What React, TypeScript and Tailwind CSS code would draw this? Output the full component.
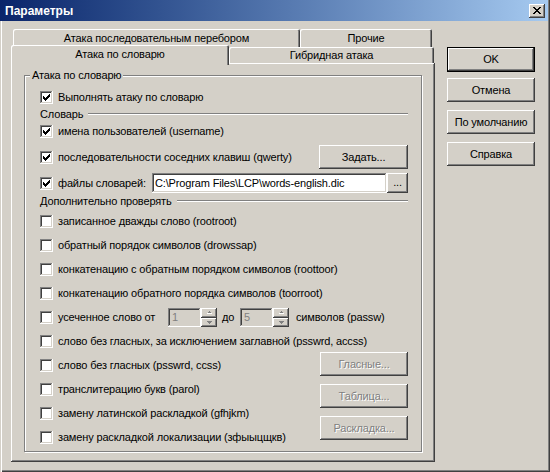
import React from "react";

type Kids = { children?: React.ReactNode };

// Classic sunken checkbox with the 7x7 pixel check glyph
function Check({ checked }: { checked?: boolean }) {
  const cols = [
    [3, 5],
    [4, 6],
    [5, 7],
    [6, 6],
    [7, 5],
    [8, 4],
    [9, 3],
  ];
  return (
    <span className="block w-[13px] h-[13px] shrink-0 bg-white shadow-[inset_-1px_-1px_#fff,inset_1px_1px_#808080,inset_-2px_-2px_#d4d0c8,inset_2px_2px_#404040]">
      {checked && (
        <svg width="13" height="13" className="block" shapeRendering="crispEdges">
          {cols.map(([x, y]) => (
            <rect key={x} x={x} y={y} width="1" height="3" fill="#000" />
          ))}
        </svg>
      )}
    </span>
  );
}

function CheckRow({ label, checked }: { label: string; checked?: boolean }) {
  return (
    <div className="flex items-center gap-[5px] h-[24px]">
      <Check checked={checked} />
      <span className="whitespace-nowrap">{label}</span>
    </div>
  );
}

function DisabledBtn({ children }: Kids) {
  return (
    <div className="w-[88px] h-[24px] flex items-center justify-center text-[#808080] [text-shadow:1px_1px_0_#fff] shadow-[inset_-1px_-1px_#404040,inset_1px_1px_#fff,inset_-2px_-2px_#808080,inset_2px_2px_#d4d0c8]">
      {children}
    </div>
  );
}

function SideBtn({ children }: Kids) {
  return (
    <div className="w-[88px] h-[24px] flex items-center justify-center shadow-[inset_-1px_-1px_#404040,inset_1px_1px_#fff,inset_-2px_-2px_#808080,inset_2px_2px_#d4d0c8]">
      {children}
    </div>
  );
}

// Disabled numeric edit with its up/down spinner
function Spin({ value }: { value: string }) {
  return (
    <div className="flex h-[19px] shrink-0">
      <div className="w-[33px] h-full pl-[4px] flex items-center text-[#808080] shadow-[inset_-1px_-1px_#fff,inset_1px_1px_#808080,inset_-2px_-2px_#d4d0c8,inset_2px_2px_#404040]">
        {value}
      </div>
      <div className="w-[16px] h-full flex flex-col">
        <div className="h-[10px] flex items-center justify-center shadow-[inset_-1px_-1px_#404040,inset_1px_1px_#fff,inset_-2px_-2px_#808080]">
          <svg width="5" height="3" shapeRendering="crispEdges" className="block">
            <rect x="2" y="0" width="1" height="1" fill="#808080" />
            <rect x="1" y="1" width="3" height="1" fill="#808080" />
            <rect x="0" y="2" width="5" height="1" fill="#fff" />
          </svg>
        </div>
        <div className="h-[9px] flex items-center justify-center shadow-[inset_-1px_-1px_#404040,inset_1px_1px_#fff,inset_-2px_-2px_#808080]">
          <svg width="5" height="3" shapeRendering="crispEdges" className="block">
            <rect x="0" y="0" width="5" height="1" fill="#808080" />
            <rect x="1" y="1" width="3" height="1" fill="#808080" />
            <rect x="2" y="2" width="1" height="1" fill="#808080" />
          </svg>
        </div>
      </div>
    </div>
  );
}

function CloseGlyph() {
  const px: [number, number, number][] = [
    [0, 0, 2], [6, 0, 2],
    [1, 1, 2], [5, 1, 2],
    [2, 2, 4],
    [3, 3, 2],
    [2, 4, 4],
    [1, 5, 2], [5, 5, 2],
    [0, 6, 2], [6, 6, 2],
  ];
  return (
    <svg width="8" height="7" shapeRendering="crispEdges" className="block">
      {px.map(([x, y, w], i) => (
        <rect key={i} x={x} y={y} width={w} height="1" fill="#000" />
      ))}
    </svg>
  );
}

export default function App() {
  return (
    <div className="w-[550px] h-[472px] bg-[#d4d0c8] text-black text-[11px] leading-[13px] tracking-[-0.15px] [font-family:'Liberation_Sans',Arial,sans-serif] flex flex-col overflow-hidden shadow-[inset_1px_0_#d4d0c8,inset_2px_0_#fff,inset_-1px_-1px_#404040,inset_-2px_-2px_#808080]">
      {/* caption */}
      <div className="h-[21px] mr-[2px] shrink-0 flex items-center justify-between pl-[5px] pr-[3px] bg-linear-to-r from-[#0a246a] to-[#a6caf0]">
        <span className="text-white font-bold text-[12px] leading-[14px] tracking-normal">Параметры</span>
        <div className="w-[16px] h-[14px] flex items-center justify-center bg-[#d4d0c8] shadow-[inset_-1px_-1px_#404040,inset_1px_1px_#fff,inset_-2px_-2px_#808080]">
          <CloseGlyph />
        </div>
      </div>

      <div className="flex pl-[11px] pt-[8px] gap-[12px]">
        {/* tab control */}
        <div className="w-[424px] flex flex-col">
          <div className="flex ml-[2px] h-[18px]">
            <div className="w-[287px] h-full flex items-center justify-center rounded-t-[2px] shadow-[inset_1px_1px_#fff,inset_-1px_0_#404040,inset_-2px_0_#808080]">
              Атака последовательным перебором
            </div>
            <div className="w-[132px] h-full flex items-center justify-center rounded-t-[2px] shadow-[inset_1px_1px_#fff,inset_-1px_0_#404040,inset_-2px_0_#808080]">
              Прочие
            </div>
          </div>
          <div className="flex items-start h-[18px]">
            <div className="relative z-10 -mt-[2px] w-[218px] h-[20px] pb-[2px] bg-[#d4d0c8] flex items-center justify-center rounded-t-[2px] shadow-[inset_1px_1px_#fff,inset_-1px_0_#404040,inset_-2px_0_#808080]">
              Атака по словарю
            </div>
            <div className="w-[205px] h-[16px] flex items-center justify-center rounded-t-[2px] shadow-[inset_1px_1px_#fff,inset_-1px_0_#404040,inset_-2px_0_#808080]">
              Гибридная атака
            </div>
          </div>

          {/* tab page */}
          <div className="-mt-[2px] h-[399px] pl-[13px] pt-[12px] shadow-[inset_-1px_-1px_#404040,inset_1px_1px_#fff,inset_-2px_-2px_#808080]">
            <div className="w-[398px] h-[377px] border border-[#808080] shadow-[inset_1px_1px_#fff,1px_1px_#fff] pl-[15px] pr-[13px] flex flex-col">
              <span className="self-start -mt-[8px] -ml-[10px] px-[2px] bg-[#d4d0c8] leading-[14px]">
                Атака по словарю
              </span>

              <div className="mt-[5px] h-[20px] flex items-center gap-[5px]">
                <Check checked />
                <span className="whitespace-nowrap">Выполнять атаку по словарю</span>
              </div>

              <div className="h-[14px] flex items-center gap-[5px]">
                <span>Словарь</span>
                <div className="flex-1 h-[2px] border-t border-t-[#808080] border-b border-b-white" />
              </div>

              <div className="h-[20px] flex items-center gap-[5px]">
                <Check checked />
                <span className="whitespace-nowrap">имена пользователей (username)</span>
              </div>

              <div className="h-[32px] flex items-center gap-[5px]">
                <Check checked />
                <span className="whitespace-nowrap">последовательности соседних клавиш (qwerty)</span>
                <div className="ml-auto w-[89px] h-[24px] shrink-0 flex items-center justify-center shadow-[inset_-1px_-1px_#404040,inset_1px_1px_#fff,inset_-2px_-2px_#808080,inset_2px_2px_#d4d0c8]">
                  Задать...
                </div>
              </div>

              <div className="h-[20px] flex items-center gap-[5px]">
                <Check checked />
                <span className="whitespace-nowrap shrink-0">файлы словарей:</span>
                <div className="ml-auto flex shrink-0">
                  <div className="w-[235px] h-[20px] bg-white pl-[3px] flex items-center whitespace-nowrap overflow-hidden shadow-[inset_-1px_-1px_#fff,inset_1px_1px_#808080,inset_-2px_-2px_#d4d0c8,inset_2px_2px_#404040]">
                    C:\Program Files\LCP\words-english.dic
                  </div>
                  <div className="w-[21px] h-[20px] flex items-center justify-center pb-[2px] shadow-[inset_-1px_-1px_#404040,inset_1px_1px_#fff,inset_-2px_-2px_#808080,inset_2px_2px_#d4d0c8]">
                    ...
                  </div>
                </div>
              </div>

              <div className="h-[16px] flex items-center gap-[5px]">
                <span className="whitespace-nowrap">Дополнительно проверять</span>
                <div className="flex-1 h-[2px] border-t border-t-[#808080] border-b border-b-white" />
              </div>

              <div className="grid">
                <div className="[grid-area:1/1] flex flex-col">
                  <CheckRow label="записанное дважды слово (rootroot)" />
                  <CheckRow label="обратный порядок символов (drowssap)" />
                  <CheckRow label="конкатенацию с обратным порядком символов (roottoor)" />
                  <CheckRow label="конкатенацию обратного порядка символов (toorroot)" />
                  <div className="flex items-center h-[24px]">
                    <Check />
                    <span className="ml-[5px] w-[110px] shrink-0 whitespace-nowrap">усеченное слово от</span>
                    <Spin value="1" />
                    <span className="ml-[5px] w-[18px] shrink-0">до</span>
                    <Spin value="5" />
                    <span className="ml-[7px] whitespace-nowrap">символов (passw)</span>
                  </div>
                  <CheckRow label="слово без гласных, за исключением заглавной (psswrd, accss)" />
                  <CheckRow label="слово без гласных (psswrd, ccss)" />
                  <CheckRow label="транслитерацию букв (parol)" />
                  <CheckRow label="замену латинской раскладкой (gfhjkm)" />
                  <CheckRow label="замену раскладкой локализации (зфыыцщкв)" />
                </div>
                <div className="[grid-area:1/1] justify-self-end self-start mt-[143px] flex flex-col gap-[8px]">
                  <DisabledBtn>Гласные...</DisabledBtn>
                  <DisabledBtn>Таблица...</DisabledBtn>
                  <DisabledBtn>Раскладка...</DisabledBtn>
                </div>
              </div>
            </div>
          </div>
        </div>

        {/* dialog buttons */}
        <div className="mt-[18px] flex flex-col gap-[8px]">
          <div className="w-[88px] h-[25px] -mb-[2px] border border-black flex items-center justify-center shadow-[inset_-1px_-1px_#404040,inset_1px_1px_#fff,inset_-2px_-2px_#808080,inset_2px_2px_#d4d0c8]">
            OK
          </div>
          <SideBtn>Отмена</SideBtn>
          <SideBtn>По умолчанию</SideBtn>
          <SideBtn>Справка</SideBtn>
        </div>
      </div>
    </div>
  );
}
